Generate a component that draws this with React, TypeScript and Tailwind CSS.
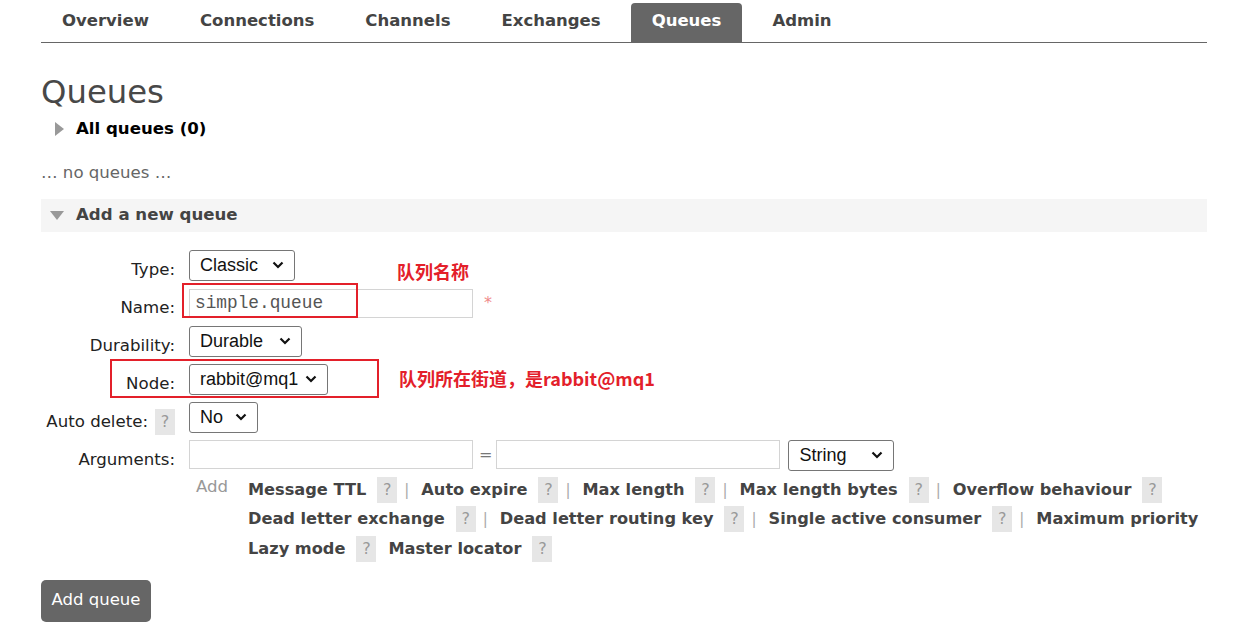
const Chevron = () => (
  <svg width="12" height="8" viewBox="0 0 12 8" className="shrink-0">
    <polyline points="1.5,1.5 6,6 10.5,1.5" fill="none" stroke="#111" strokeWidth="2.2" />
  </svg>
);

const FakeSelect = ({ value, width }: { value: string; width: string }) => (
  <div
    className={`${width} h-[31px] flex items-center justify-between pl-[10px] pr-[10px] border border-[#767676] rounded-[3px] bg-white font-['Liberation_Sans',sans-serif] text-[18px] text-[#111]`}
  >
    <span>{value}</span>
    <Chevron />
  </div>
);

const Help = () => (
  <span className="inline-flex w-[20px] h-[26px] shrink-0 items-center justify-center bg-[#e6e6e6] text-[#999] text-[16px] font-normal">
    ?
  </span>
);

const Label = ({ text, children }: { text: string; children?: React.ReactNode }) => (
  <div className="flex justify-end items-center gap-[7px] pt-[10px] text-[16.6px] text-[#222] whitespace-nowrap">
    <span>{text}</span>
    {children}
  </div>
);

type Arg = { name: string; sep: boolean; help?: boolean };

const rows: Arg[][] = [
  [
    { name: "Message TTL", sep: true },
    { name: "Auto expire", sep: true },
    { name: "Max length", sep: true },
    { name: "Max length bytes", sep: true },
    { name: "Overflow behaviour", sep: false },
  ],
  [
    { name: "Dead letter exchange", sep: true },
    { name: "Dead letter routing key", sep: true },
    { name: "Single active consumer", sep: true },
    { name: "Maximum priority", sep: false, help: false },
  ],
  [
    { name: "Lazy mode", sep: false },
    { name: "Master locator", sep: false },
  ],
];

const tabs = ["Overview", "Connections", "Channels", "Exchanges", "Queues", "Admin"];

export default function App() {
  return (
    <div className="relative w-[1258px] min-h-[641px] bg-white font-['DejaVu_Sans',sans-serif] text-[#333]">
      <div className="ml-[41px] w-[1166px]">
        {/* nav */}
        <div className="flex items-end gap-[9px] pt-[3px] border-b border-[#666] h-[43px]">
          {tabs.map((t) => (
            <div
              key={t}
              className={`h-[39px] px-[21px] flex items-center pb-[3px] text-[16.5px] font-bold rounded-t-[4px] whitespace-nowrap ${
                t === "Queues" ? "bg-[#666] text-white" : "text-[#444]"
              }`}
            >
              {t}
            </div>
          ))}
        </div>

        <h1 className="mt-[31px] text-[32.3px] leading-[36px] text-[#484848] font-normal">Queues</h1>

        <div className="flex items-center h-[24px] mt-[7px] pl-[14px]">
          <svg width="9" height="14" viewBox="0 0 9 14" className="mr-[12px]">
            <polygon points="0,0 9,7 0,14" fill="#999" />
          </svg>
          <span className="text-[16.6px] font-bold text-black">All queues (0)</span>
        </div>

        <div className="mt-[21px] h-[22px] flex items-center text-[16.6px] text-[#666]">… no queues …</div>

        <div className="mt-[15px] h-[33px] bg-[#f5f5f5] flex items-center pl-[9px]">
          <svg width="14" height="9" viewBox="0 0 14 9" className="mr-[12px]">
            <polygon points="0,0 14,0 7,9" fill="#999" />
          </svg>
          <span className="text-[16.6px] font-bold text-[#444]">Add a new queue</span>
        </div>

        {/* form */}
        <div className="mt-[14px] grid grid-cols-[134px_1fr] gap-x-[14px] auto-rows-[38px]">
          <Label text="Type:" />
          <div className="flex items-center">
            <FakeSelect value="Classic" width="w-[106px]" />
          </div>

          <Label text="Name:" />
          <div className="flex items-center">
            <div className="w-[284px] h-[29px] border border-[#d4d4d4] flex items-center pl-[5px] font-['Liberation_Mono',monospace] text-[17.8px] text-[#555]">
              simple.queue
            </div>
            <span className="ml-[11px] text-[16px] text-[#f08a8a]">*</span>
          </div>

          <Label text="Durability:" />
          <div className="flex items-center">
            <FakeSelect value="Durable" width="w-[113px]" />
          </div>

          <Label text="Node:" />
          <div className="flex items-center">
            <FakeSelect value="rabbit@mq1" width="w-[139px]" />
          </div>

          <Label text="Auto delete:">
            <Help />
          </Label>
          <div className="flex items-center">
            <FakeSelect value="No" width="w-[69px]" />
          </div>

          <Label text="Arguments:" />
          <div className="flex items-center">
            <div className="w-[284px] h-[29px] border border-[#d4d4d4] mt-[-2px]" />
            <span className="ml-[6px] mr-[4px] text-[16px] text-[#777]">=</span>
            <div className="w-[284px] h-[29px] border border-[#d4d4d4] mt-[-2px]" />
            <div className="ml-[8px]">
              <FakeSelect value="String" width="w-[106px]" />
            </div>
          </div>
        </div>

        <div className="ml-[148px] mt-[1px] flex">
          <span className="ml-[7px] w-[52px] shrink-0 pt-[1px] text-[16.6px] text-[#999] leading-[22px]">Add</span>
          <div className="flex flex-col">
            {rows.map((row, ri) => (
              <div key={`row-${ri}`} className="flex items-center h-[29.5px] whitespace-nowrap">
                {row.map((a, ai) => (
                  <div
                    key={a.name}
                    className={`flex items-center shrink-0 ${ai > 0 && !row[ai - 1].sep ? "ml-[12px]" : ""}`}
                  >
                    <span className="text-[16.2px] font-bold text-[#444]">{a.name}</span>
                    {a.help !== false && (
                      <span className="ml-[11px]">
                        <Help />
                      </span>
                    )}
                    {a.sep && <span className="ml-[7px] mr-[12px] text-[15px] text-[#aaa]">|</span>}
                  </div>
                ))}
              </div>
            ))}
          </div>
        </div>

        <button className="mt-[16px] w-[110px] h-[42px] bg-[#666] rounded-[5px] text-white text-[16.5px] flex items-center justify-center">
          Add queue
        </button>
      </div>

      {/* annotations */}
      <div className="absolute left-[182px] top-[283px] w-[176px] h-[35px] border-2 border-[#e3202a]" />
      <div className="absolute left-[110px] top-[359px] w-[269px] h-[39px] border-2 border-[#e3202a]" />
      <div className="absolute left-[397px] top-[259px] text-[18px] leading-[24px] font-bold text-[#e3202a] font-['Noto_Sans_CJK_SC',sans-serif]">
        队列名称
      </div>
      <div className="absolute left-[399px] top-[366px] text-[18px] leading-[24px] font-bold text-[#e3202a] font-['Noto_Sans_CJK_SC',sans-serif]">
        队列所在街道，是rabbit@mq1
      </div>
    </div>
  );
}
